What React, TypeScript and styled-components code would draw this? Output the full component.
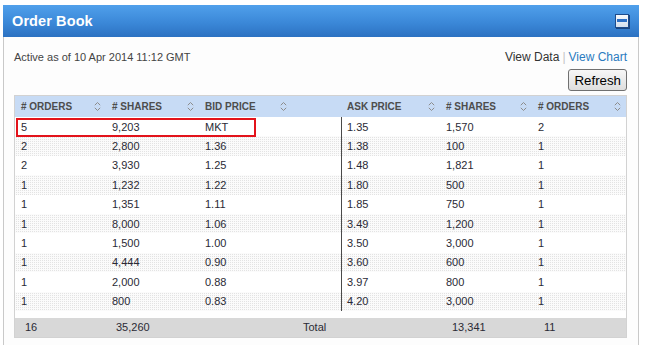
import styled, { createGlobalStyle } from 'styled-components';

const GlobalStyle = createGlobalStyle`
  html, body {
    margin: 0;
    padding: 0;
    background: #ffffff;
    font-family: "Liberation Sans", Arial, sans-serif;
  }
`;

const COLS = '91px 93px 93px 49px 99px 92px 1fr';

const Panel = styled.div`
  width: 636px;
  margin: 5px 0 0 3px;
`;

const TitleBar = styled.div`
  height: 32px;
  display: flex;
  align-items: center;
  justify-content: space-between;
  padding: 0 10px 0 9px;
  background: linear-gradient(#50a0eb, #3b88d8 55%, #2c72c2);
`;

const Title = styled.h1`
  margin: 0;
  font-size: 14.5px;
  font-weight: bold;
  color: #ffffff;
  letter-spacing: 0.1px;
`;

const MinButton = styled.span`
  position: relative;
  display: block;
  width: 14px;
  height: 14px;
  box-sizing: border-box;
  border: 1px solid #1c4b8c;
  background: linear-gradient(#f6f8fb, #d3dfee);
  box-shadow: 1px 1px 0 #1a457f;

  &::before {
    content: '';
    position: absolute;
    left: 1px;
    right: 1px;
    top: 4px;
    height: 3px;
    background: #2b6ec4;
  }
`;

const Body = styled.div`
  border-left: 1px solid #c9c9c9;
  border-right: 1px solid #c9c9c9;
  background: #fdfdfd;
  padding: 12px 11px 20px 10px;
`;

const InfoRow = styled.div`
  display: flex;
  justify-content: space-between;
  align-items: center;
  height: 16px;
`;

const Stamp = styled.span`
  font-size: 11px;
  color: #444;
`;

const Links = styled.span`
  font-size: 12px;
  color: #333;
`;

const Sep = styled.span`
  color: #c4c4c4;
  margin: 0 3px;
`;

const LinkText = styled.a`
  color: #2a7bbf;
  text-decoration: none;
`;

const ButtonRow = styled.div`
  display: flex;
  justify-content: flex-end;
  margin-top: 4px;
`;

const RefreshButton = styled.button`
  height: 22px;
  padding: 0 5px;
  font-family: "Liberation Sans", Arial, sans-serif;
  font-size: 13.3px;
  color: #000;
  border: 1px solid #707070;
  border-radius: 3px;
  background: linear-gradient(#f7f7f7, #dedede);
`;

const Book = styled.div`
  position: relative;
  margin-top: 4px;
  border: 1px solid #d2d2d2;
  background: #ffffff;
`;

const HeadRow = styled.div`
  display: grid;
  grid-template-columns: ${COLS};
  height: 21px;
  background: #c7dbf5;
`;

const HeadCell = styled.div`
  display: flex;
  align-items: center;
  justify-content: space-between;
  padding: 0 5px 0 6px;
  font-size: 10px;
  font-weight: bold;
  color: #4d4d4d;
`;

const Rows = styled.div`
  padding-bottom: 7px;
`;

// even rows carry the fine dotted stripe
const Row = styled.div<{ $dotted: boolean }>`
  display: grid;
  grid-template-columns: ${COLS};
  height: 19.4px;
  align-items: center;
  font-size: 11px;
  color: #2a2a35;
  background-color: ${(p) => (p.$dotted ? '#fbfbfb' : '#ffffff')};
  background-image: ${(p) =>
    p.$dotted
      ? 'linear-gradient(#fbfbfb 1px, transparent 1px), linear-gradient(90deg, #fbfbfb 1px, #e3e3e3 1px)'
      : 'none'};
  background-size: 2px 2px;
`;

const Cell = styled.div<{ $divider?: boolean }>`
  height: 100%;
  display: flex;
  align-items: center;
  padding-left: ${(p) => (p.$divider ? '5px' : '6px')};
  border-left: ${(p) => (p.$divider ? '1px solid #4a4a4a' : 'none')};
`;

const FootRow = styled.div`
  display: grid;
  grid-template-columns: 91px 93px 241px 92px 1fr;
  height: 19px;
  align-items: center;
  background: #d8d8d8;
  font-size: 11px;
  color: #2a2a35;
`;

const FootCell = styled.div<{ $pad?: number }>`
  padding-left: ${(p) => p.$pad ?? 10}px;
`;

const Highlight = styled.div`
  position: absolute;
  left: 1px;
  top: 22px;
  width: 240px;
  height: 19px;
  box-sizing: border-box;
  border: 2px solid #e3131b;
  pointer-events: none;
`;

const SortIcon = () => (
  <svg width="7" height="11" viewBox="0 0 7 11" fill="none" stroke="#8c8c8c" strokeWidth="1">
    <path d="M0.8 4.2 L3.5 1.5 L6.2 4.2" />
    <path d="M0.8 6.8 L3.5 9.5 L6.2 6.8" />
  </svg>
);

const bids: [string, string, string][] = [
  ['5', '9,203', 'MKT'],
  ['2', '2,800', '1.36'],
  ['2', '3,930', '1.25'],
  ['1', '1,232', '1.22'],
  ['1', '1,351', '1.11'],
  ['1', '8,000', '1.06'],
  ['1', '1,500', '1.00'],
  ['1', '4,444', '0.90'],
  ['1', '2,000', '0.88'],
  ['1', '800', '0.83'],
];

const asks: [string, string, string][] = [
  ['1.35', '1,570', '2'],
  ['1.38', '100', '1'],
  ['1.48', '1,821', '1'],
  ['1.80', '500', '1'],
  ['1.85', '750', '1'],
  ['3.49', '1,200', '1'],
  ['3.50', '3,000', '1'],
  ['3.60', '600', '1'],
  ['3.97', '800', '1'],
  ['4.20', '3,000', '1'],
];

export default function App() {
  return (
    <>
      <GlobalStyle />
      <Panel>
        <TitleBar>
          <Title>Order Book</Title>
          <MinButton />
        </TitleBar>
        <Body>
          <InfoRow>
            <Stamp>Active as of 10 Apr 2014 11:12 GMT</Stamp>
            <Links>
              View Data<Sep>|</Sep>
              <LinkText href="#">View Chart</LinkText>
            </Links>
          </InfoRow>
          <ButtonRow>
            <RefreshButton>Refresh</RefreshButton>
          </ButtonRow>
          <Book>
            <HeadRow>
              <HeadCell># ORDERS<SortIcon /></HeadCell>
              <HeadCell># SHARES<SortIcon /></HeadCell>
              <HeadCell>BID PRICE<SortIcon /></HeadCell>
              <HeadCell />
              <HeadCell>ASK PRICE<SortIcon /></HeadCell>
              <HeadCell># SHARES<SortIcon /></HeadCell>
              <HeadCell># ORDERS<SortIcon /></HeadCell>
            </HeadRow>
            <Rows>
              {bids.map((b, i) => (
                <Row key={i} $dotted={i % 2 === 1}>
                  <Cell>{b[0]}</Cell>
                  <Cell>{b[1]}</Cell>
                  <Cell>{b[2]}</Cell>
                  <Cell />
                  <Cell $divider>{asks[i][0]}</Cell>
                  <Cell>{asks[i][1]}</Cell>
                  <Cell>{asks[i][2]}</Cell>
                </Row>
              ))}
            </Rows>
            <FootRow>
              <FootCell>16</FootCell>
              <FootCell>35,260</FootCell>
              <FootCell $pad={104}>Total</FootCell>
              <FootCell $pad={12}>13,341</FootCell>
              <FootCell $pad={12}>11</FootCell>
            </FootRow>
            <Highlight />
          </Book>
        </Body>
      </Panel>
    </>
  );
}
